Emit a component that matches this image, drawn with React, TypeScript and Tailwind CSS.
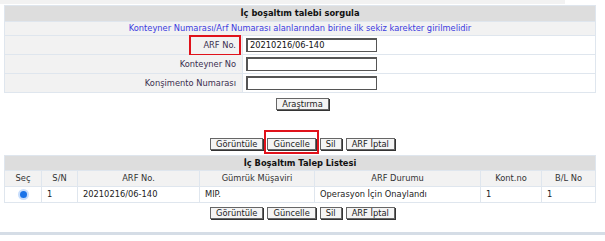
import React from "react";

const font = { fontFamily: '"DejaVu Sans", Verdana, sans-serif' };

function Btn({ children }: { children: React.ReactNode }) {
  return (
    <button className="block h-[12px] px-[5px] text-[8.3px] leading-none text-[#222] bg-[#f4f4f4] border border-[#666] shadow-[1px_1px_0_#333]">
      {children}
    </button>
  );
}

function ButtonRow({ highlight }: { highlight?: boolean }) {
  return (
    <div className="flex justify-center gap-[4px]">
      <Btn>Görüntüle</Btn>
      <div className="relative flex">
        <Btn>Güncelle</Btn>
        {highlight && (
          <div className="absolute left-[-3px] right-[-3px] top-[-8px] bottom-[-4px] border-2 border-[#e0121b]" />
        )}
      </div>
      <Btn>Sil</Btn>
      <Btn>ARF İptal</Btn>
    </div>
  );
}

export default function App() {
  const cell = "border border-[#dfe6ee]";
  return (
    <div className="w-[605px] h-[241px] bg-white relative overflow-hidden" style={font}>
      <div className="h-[4px] w-[565px] bg-[#f2f2f2]" />
      <table className="ml-[4px] mt-[1px] w-[592px] border-collapse text-[8.3px] leading-none">
        <tbody>
          <tr className="h-[16px] bg-[#dddddd]">
            <td colSpan={2} className={`${cell} text-center font-bold text-[#111]`}>
              İç boşaltım talebi sorgula
            </td>
          </tr>
          <tr className="h-[14px] bg-[#f2f2f2]">
            <td colSpan={2} className={`${cell} text-center text-[#3b3bdf]`}>
              Konteyner Numarası/Arf Numarası alanlarından birine ilk sekiz karekter girilmelidir
            </td>
          </tr>
          {[
            ["ARF No.", "20210216/06-140"],
            ["Konteyner No", ""],
            ["Konşimento Numarası", ""],
          ].map(([label, val], i) => (
            <tr key={label} className="h-[19px]">
              <td className={`${cell} relative w-[238px] bg-[#f2f2f2] text-right pr-[6px] text-[#3a2f4f]`}>
                {label}
                {i === 0 && (
                  <span className="absolute right-[1px] top-[-1px] w-[52px] h-[21px] border-2 border-[#e0121b]" />
                )}
              </td>
              <td className={`${cell} bg-white pl-[3px]`}>
                <div className="w-[131px] h-[14px] border border-[#555] border-t-2 border-l-2 bg-white flex items-center pl-[2px] text-[#111]">
                  {val}
                </div>
              </td>
            </tr>
          ))}
        </tbody>
      </table>
      <div className="mt-[5px] flex justify-center">
        <Btn>Araştırma</Btn>
      </div>
      <div className="mt-[28px]">
        <ButtonRow highlight />
      </div>
      <table className="ml-[4px] mt-[5px] w-[592px] border-collapse text-[8.3px] leading-none text-[#222]">
        <tbody>
          <tr className="h-[15px] bg-[#dddddd]">
            <td colSpan={7} className={`${cell} text-center font-bold text-[#111]`}>
              İç Boşaltım Talep Listesi
            </td>
          </tr>
          <tr className="h-[16px] bg-[#f2f2f2] text-center text-[#333]">
            <td className={`${cell} w-[37px]`}>Seç</td>
            <td className={`${cell} w-[36px]`}>S/N</td>
            <td className={`${cell} w-[122px]`}>ARF No.</td>
            <td className={`${cell} w-[115px]`}>Gümrük Müşaviri</td>
            <td className={`${cell} w-[166px]`}>ARF Durumu</td>
            <td className={`${cell} w-[61px]`}>Kont.no</td>
            <td className={`${cell}`}>B/L No</td>
          </tr>
          <tr className="h-[16px] bg-white">
            <td className={`${cell} text-center`}>
              <span className="inline-block w-[11px] h-[11px] rounded-full bg-[#c8defc] align-middle relative">
                <span className="absolute inset-[2px] rounded-full bg-[#1a73e8]" />
              </span>
            </td>
            <td className={`${cell} pl-[5px]`}>1</td>
            <td className={`${cell} pl-[5px]`}>20210216/06-140</td>
            <td className={`${cell} pl-[5px]`}>MIP.</td>
            <td className={`${cell} pl-[5px]`}>Operasyon İçin Onaylandı</td>
            <td className={`${cell} pl-[5px]`}>1</td>
            <td className={`${cell} pl-[5px]`}>1</td>
          </tr>
        </tbody>
      </table>
      <div className="mt-[4px]">
        <ButtonRow />
      </div>
      <div className="absolute left-0 right-0 top-[232px] h-[3px] bg-[#d5dde6]" />
    </div>
  );
}
